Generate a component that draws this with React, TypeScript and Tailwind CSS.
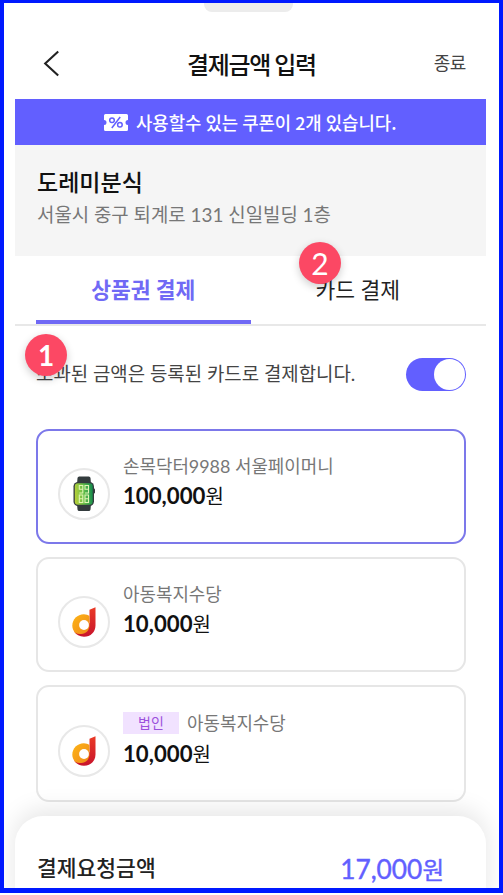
import React, { useState } from 'react';

type Tab = 'voucher' | 'card';

interface Voucher {
  id: string;
  name: string;
  amount: string;
  icon: 'watch' | 'dream';
  corporate?: boolean;
}

const vouchers: Voucher[] = [
  { id: 'wrist', name: '손목닥터9988 서울페이머니', amount: '100,000', icon: 'watch' },
  { id: 'child', name: '아동복지수당', amount: '10,000', icon: 'dream' },
  { id: 'child-corp', name: '아동복지수당', amount: '10,000', icon: 'dream', corporate: true },
];

const App: React.FC = () => {
  const [tab, setTab] = useState<Tab>('voucher');
  const [selected, setSelected] = useState('wrist');
  const [overflowCard, setOverflowCard] = useState(true);

  return (
    <div className="w-[503px] h-[895px] bg-white overflow-hidden font-[Lato,'Noto_Sans_CJK_KR',sans-serif] text-[#222]">
      <div className="h-[893px] border-4 border-t-3 border-b-5 border-[#0019ff] pl-[11px] pr-[13px] overflow-hidden flex flex-col">
        <div className="ml-[189px] w-[89px] h-[9px] rounded-b-lg bg-[#ececec] shrink-0" />

        <header className="h-[87px] shrink-0 flex items-start justify-between pl-[28px] pr-[20px] pt-[34px]">
          <button aria-label="뒤로" className="w-[16px] mt-[4px]">
            <svg width="16" height="27" viewBox="0 0 16 27" fill="none" stroke="#222" strokeWidth="2.1">
              <path d="M15.2 1.5 2.2 13.500 15.200 25.500" />
            </svg>
          </button>
          <h1 className="text-[24px] leading-[35px] font-medium tracking-[-1.3px] text-[#111] ml-[10px] font-['Noto_Sans_CJK_KR',sans-serif]">결제금액 입력</h1>
          <button className="text-[18px] leading-[35px] tracking-[-0.4px] text-[#444]">종료</button>
        </header>

        <div className="h-[46px] shrink-0 bg-[#625fff] flex items-center pl-[89px] gap-[8px] text-white">
          <CouponIcon />
          <span className="text-[17.8px] leading-[46px] font-medium font-['Noto_Sans_CJK_KR',sans-serif]">사용할수 있는 쿠폰이 2개 있습니다.</span>
        </div>

        <section className="h-[111px] shrink-0 bg-[#f5f5f5] px-[22px] pt-[20px]">
          <h2 className="text-[23px] leading-[34px] font-medium text-[#111]">도레미분식</h2>
          <p className="text-[18.9px] leading-[32px] text-[#777]">서울시 중구 퇴계로 131 신일빌딩 1층</p>
        </section>

        <nav className="relative h-[70px] shrink-0 flex px-[21px] border-b-2 border-[#e8e8e8]">
          <TabButton active={tab === 'voucher'} onClick={() => setTab('voucher')}>상품권 결제</TabButton>
          <TabButton active={tab === 'card'} onClick={() => setTab('card')}>카드 결제</TabButton>
          <Marker className="left-[284px] top-[-14px] text-[30px]">2</Marker>
        </nav>

        <div className="relative h-[103px] shrink-0 flex items-start justify-between pl-[21px] pr-[20px] pt-[32px]">
          <p className="text-[18.9px] leading-[32px] text-[#444]">초과된 금액은 등록된 카드로 결제합니다.</p>
          <button
            role="switch"
            aria-checked={overflowCard}
            aria-label="초과 금액 카드 결제"
            onClick={() => setOverflowCard(!overflowCard)}
            className={`w-[60px] h-[33px] rounded-full p-[1px] flex ${overflowCard ? 'bg-[#625fff] justify-end' : 'bg-gray-300 justify-start'}`}
          >
            <span className="w-[31px] h-[31px] rounded-full bg-white" />
          </button>
          <Marker className="left-[10px] top-[8px] text-[28px] font-bold">1</Marker>
        </div>

        <ul className="shrink-0 pl-[21px] pr-[20px] flex flex-col gap-[13px]">
          {vouchers.map(v => (
            <VoucherCard key={v.id} voucher={v} selected={selected === v.id} onSelect={() => setSelected(v.id)} />
          ))}
        </ul>

        <footer className="relative mt-[14px] h-[90px] shrink-0 rounded-t-[28px] bg-white shadow-[0_-6px_24px_rgba(0,0,0,0.1)] pl-[22px] pr-[42px] pt-[33px] flex items-start justify-between">
          <span className="text-[21.5px] leading-[38px] font-medium text-[#222]">결제요청금액</span>
          <span className="text-[26.3px] leading-[40px] text-[#625fff] [-webkit-text-stroke:0.4px_#625fff]">17,000<span className="text-[23.5px]">원</span></span>
        </footer>
      </div>
    </div>
  );
};

interface TabButtonProps {
  active: boolean;
  onClick: () => void;
  children: React.ReactNode;
}

const TabButton: React.FC<TabButtonProps> = ({ active, onClick, children }) => (
  <button
    onClick={onClick}
    className={`flex-1 h-[68px] text-[21.5px] leading-[68px] border-b-4 ${active ? 'font-bold text-[#7069f5] border-[#7069f5]' : 'font-normal text-[#222] border-transparent'}`}
  >
    {children}
  </button>
);

const Marker: React.FC<{ className: string; children: React.ReactNode }> = ({ className, children }) => (
  <span className={`absolute w-[42px] h-[42px] rounded-full bg-[#fc4864] text-white leading-[42px] text-center shadow-[0_3px_8px_rgba(0,0,0,0.2)] ${className}`}>
    {children}
  </span>
);

interface VoucherCardProps {
  voucher: Voucher;
  selected: boolean;
  onSelect: () => void;
}

const VoucherCard: React.FC<VoucherCardProps> = ({ voucher, selected, onSelect }) => (
  <li
    onClick={onSelect}
    className={`rounded-[13px] bg-white flex pl-[20px] border-2 ${selected ? 'border-[#7c78ea]' : 'border-[#e6e6e6]'} ${voucher.corporate ? 'h-[117px] pt-px' : 'h-[115px]'}`}
  >
    <div className="w-[52px] h-[52px] mt-[37px] rounded-full border-2 border-[#e8e8e8] flex items-center justify-center">
      {voucher.icon === 'watch' ? <WatchIcon /> : <DreamIcon />}
    </div>
    <div className="ml-[13px] pt-[20px]">
      <div className="flex items-center text-[17.9px] leading-[30px] text-[#777]">
        {voucher.corporate && (
          <span className="w-[56px] h-[22px] mr-[8px] bg-[#f1e2ff] text-[#9b50dc] text-[14px] leading-[21px] text-center">법인</span>
        )}
        {voucher.name}
      </div>
      <div className={`text-[22.2px] font-bold text-[#111] ${voucher.corporate ? 'leading-[32px]' : 'leading-[30px]'}`}>
        {voucher.amount}<span className="text-[20px] font-normal">원</span>
      </div>
    </div>
  </li>
);

const CouponIcon = () => (
  <svg width="24" height="17" viewBox="0 0 24 17" fill="none">
    <path fill="#fff" d="M1.5 0h21A1.5 1.5 0 0 1 24 1.5V6a2.5 2.5 0 0 0 0 5v4.5a1.5 1.5 0 0 1-1.5 1.5h-21A1.5 1.5 0 0 1 0 15.5V11a2.5 2.5 0 0 0 0-5V1.500A1.500 1.500 0 0 1 1.500 0Z" />
    <g stroke="#625fff" strokeWidth="1.5">
      <circle cx="8" cy="6.300" r="2.300" />
      <circle cx="15.900" cy="10.700" r="2.300" />
      <path d="m16.200 3-8.400 11" />
    </g>
  </svg>
);

const WatchIcon = () => (
  <svg width="24" height="36" viewBox="0 0 24 36">
    <defs>
      <linearGradient id="watchFace" x1="0" y1="0.3" x2="1" y2="0.2">
        <stop offset="0" stopColor="#b4cf3a" />
        <stop offset="0.5" stopColor="#5fbc4a" />
        <stop offset="1" stopColor="#128a4c" />
      </linearGradient>
    </defs>
    <path fill="#333b3d" d="M5.500 2Q5.700.500 7.200.500h9.600q1.500 0 1.700 1.500L19 8H5ZM5 28h14l-.500 5.500q-.200 1.500-1.700 1.500H7.200q-1.500 0-1.700-1.500Z" />
    <rect x="21" y="12.5" width="2" height="5" rx="1" fill="#333b3d" />
    <rect x="1.500" y="6" width="20.500" height="24" rx="4.500" fill="#333b3d" />
    <rect x="2.800" y="7.300" width="17.900" height="21.400" rx="3.300" fill="url(#watchFace)" />
    <g fill="none" stroke="#e2f5b4" strokeWidth="1.100">
      <path d="M10.800 13.200H7.300V9.500h3.500V17H7.300M16.500 13.200H13V9.500h3.500V17H13" />
      <path d="M7.300 19h3.500v7.500H7.300ZM7.300 22.700h3.500M13 19h3.500v7.500H13ZM13 22.700h3.500" />
    </g>
  </svg>
);

const DreamIcon = () => (
  <svg width="26" height="32" viewBox="0 0 26 32">
    <defs>
      <linearGradient id="dreamStem" x1="0" y1="0" x2="0" y2="1">
        <stop offset="0" stopColor="#ea3a26" />
        <stop offset="1" stopColor="#c8142c" />
      </linearGradient>
      <linearGradient id="dreamBowl" x1="0" y1="0" x2="1" y2="1">
        <stop offset="0" stopColor="#fdb515" />
        <stop offset="1" stopColor="#f08a1c" />
      </linearGradient>
    </defs>
    <path fill="url(#dreamStem)" d="M18.500 3.800 24.500 1.200V19.500c0 6.500-4.900 11.300-11.500 11.300-4.400 0-7.900-1.900-9.900-5.200L12 22.500 18.500 17Z" />
    <path fill="url(#dreamBowl)" d="M12.800 8.300c2.300 0 4.200.7 5.700 1.900V19c0 5.200-3.600 9-8.300 9-2.700 0-4.900-.6-6.400-1.600C2.200 24.500 1.300 22.300 1.300 19.600 1.300 13.300 6.400 8.300 12.800 8.300Z" />
    <circle cx="13" cy="19" r="4.900" fill="#fff" />
  </svg>
);

export default App;
